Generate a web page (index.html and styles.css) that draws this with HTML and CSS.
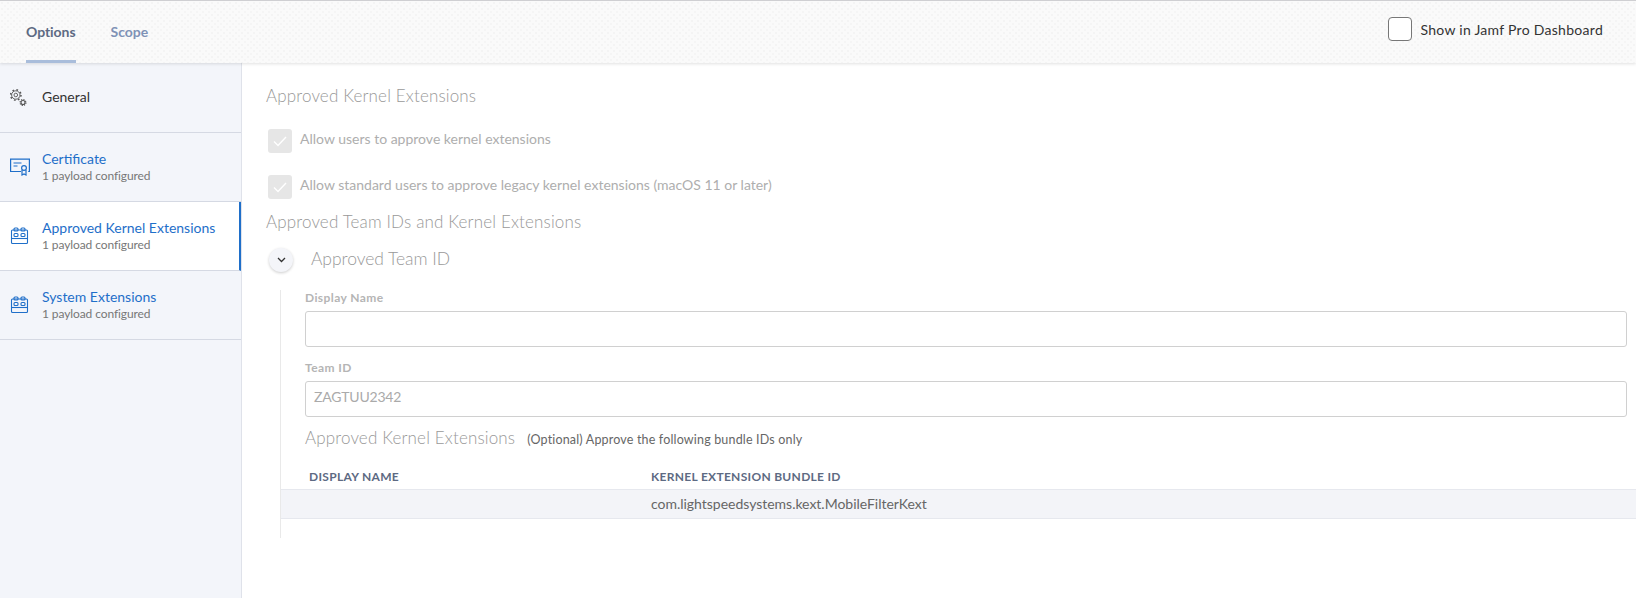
FILE: index.html
```html
<!DOCTYPE html>
<html lang="en">
<head>
<meta charset="utf-8">
<title>Approved Kernel Extensions</title>
<link rel="stylesheet" href="styles.css">
</head>
<body>
<header class="topbar">
  <nav class="tabs">
    <a class="tab tab-active">Options</a>
    <a class="tab">Scope</a>
  </nav>
  <label class="dash">
    <span class="dash-box"></span>
    <span>Show in Jamf Pro Dashboard</span>
  </label>
</header>
<div class="layout">
  <aside class="sidebar">
    <div class="item item-plain">
      <svg class="icon" width="20" height="20" viewBox="0 0 20 20" fill="none" stroke="#555">
        <circle cx="5.8" cy="8" r="4.2" stroke-width=".9"/>
        <circle cx="5.8" cy="8" r="5.2" stroke-width="1.5" stroke-dasharray="1.7 2.38"/>
        <circle cx="5.8" cy="8" r="1.8" stroke-width=".9"/>
        <circle cx="13" cy="15.5" r="2" stroke-width="1.1"/>
        <circle cx="13" cy="15.5" r="2.9" stroke-width="1.2" stroke-dasharray="1.2 1.08"/>
      </svg>
      <div class="item-text"><div class="item-name">General</div></div>
    </div>
    <div class="item">
      <svg class="icon" width="20" height="18" viewBox="0 0 20 18" fill="none" stroke="#1f6fc9" stroke-width="1.2">
        <path d="M11 13.5H.6V1.1h18.8v12.4h-1.2"/>
        <path d="M3.5 5h8M3.5 8h4"/>
        <path d="M16 5.5h.1"/>
        <circle cx="14" cy="10" r="2.4"/>
        <path d="M12 12v5l2-1 2 1v-5"/>
      </svg>
      <div class="item-text">
        <div class="item-name item-link">Certificate</div>
        <div class="item-sub">1 payload configured</div>
      </div>
    </div>
    <div class="item item-active">
      <svg class="icon" width="20" height="18" viewBox="0 0 20 18" fill="none" stroke="#1f6fc9" stroke-width="1.1">
        <rect x="1.5" y="3" width="16" height="13.5" rx="1"/>
        <path d="M1.5 11.5h16"/>
        <rect x="4" y="1" width="4" height="3" rx="1"/>
        <rect x="11" y="1" width="4" height="3" rx="1"/>
        <rect x="4" y="6.5" width="4" height="3" rx="1"/>
        <rect x="11" y="6.5" width="4" height="3" rx="1"/>
      </svg>
      <div class="item-text">
        <div class="item-name item-link">Approved Kernel Extensions</div>
        <div class="item-sub">1 payload configured</div>
      </div>
    </div>
    <div class="item">
      <svg class="icon" width="20" height="18" viewBox="0 0 20 18" fill="none" stroke="#1f6fc9" stroke-width="1.1">
        <rect x="1.5" y="3" width="16" height="13.5" rx="1"/>
        <path d="M1.5 11.5h16"/>
        <rect x="4" y="1" width="4" height="3" rx="1"/>
        <rect x="11" y="1" width="4" height="3" rx="1"/>
        <rect x="4" y="6.5" width="4" height="3" rx="1"/>
        <rect x="11" y="6.5" width="4" height="3" rx="1"/>
      </svg>
      <div class="item-text">
        <div class="item-name item-link">System Extensions</div>
        <div class="item-sub">1 payload configured</div>
      </div>
    </div>
  </aside>
  <main class="content">
    <h2 class="section-title first">Approved Kernel Extensions</h2>
    <div class="check-row">
      <span class="check"><svg width="14" height="11" viewBox="0 0 14 11" fill="none" stroke="#fff" stroke-width="1.4"><path d="M1 5.5l4 4 8-8.5"/></svg></span>
      <span class="check-label">Allow users to approve kernel extensions</span>
    </div>
    <div class="check-row">
      <span class="check"><svg width="14" height="11" viewBox="0 0 14 11" fill="none" stroke="#fff" stroke-width="1.4"><path d="M1 5.5l4 4 8-8.5"/></svg></span>
      <span class="check-label">Allow standard users to approve legacy kernel extensions (macOS 11 or later)</span>
    </div>
    <h2 class="section-title second">Approved Team IDs and Kernel Extensions</h2>
    <div class="team-head">
      <span class="toggle"><svg width="9" height="6" viewBox="0 0 9 6" fill="none" stroke="#333" stroke-width="1.3"><path d="M1 1l3.5 3.5L8 1"/></svg></span>
      <h3 class="team-title">Approved Team ID</h3>
    </div>
    <section class="team-body">
      <div class="fields">
        <div class="field-label">Display Name</div>
        <div class="input"></div>
        <div class="field-label">Team ID</div>
        <div class="input input-value">ZAGTUU2342</div>
        <div class="kext-head">
          <span class="kext-title">Approved Kernel Extensions</span>
          <span class="kext-note">(Optional) Approve the following bundle IDs only</span>
        </div>
      </div>
      <div class="table-head">
        <div class="col-a">DISPLAY NAME</div>
        <div>KERNEL EXTENSION BUNDLE ID</div>
      </div>
      <div class="table-row">
        <div class="col-a"></div>
        <div>com.lightspeedsystems.kext.MobileFilterKext</div>
      </div>
    </section>
  </main>
</div>
</body>
</html>
```
FILE: styles.css
```css
* { box-sizing: border-box; }
html, body { margin: 0; padding: 0; }
body {
  width: 1636px;
  height: 598px;
  overflow: hidden;
  background: #fff;
  font-family: Lato, "Open Sans", sans-serif;
  color: #333;
}
.topbar {
  height: 63px;
  border-top: 1px solid #cfcfd2;
  background-color: #fafafa;
  background-image: radial-gradient(circle at 2px 2px, #f4f4f4 1px, transparent 1.5px), radial-gradient(circle at 5px 5px, #f5f5f5 1px, transparent 1.5px);
  background-size: 6px 6px;
  box-shadow: 0 1px 3px rgba(0, 0, 0, .12);
  display: flex;
  justify-content: space-between;
  position: relative;
  z-index: 1;
}
.tabs { display: flex; gap: 35px; padding-left: 26px; }
.tab {
  height: 62px;
  padding-top: 22px;
  font-size: 14px;
  line-height: 18px;
  font-weight: 700;
  letter-spacing: -.05px;
  color: #7f92b6;
}
.tab-active { color: #5d6a83; border-bottom: 3px solid #a9bddb; }
.dash { display: flex; align-items: center; gap: 8px; height: 56px; padding-right: 33px; font-size: 14px; letter-spacing: .28px; color: #333; }
.dash-box { width: 24px; height: 24px; background: #fff; border: 1px solid #777; border-radius: 4px; }
.layout { display: flex; height: 535px; }
.sidebar { width: 242px; flex: none; background: #f3f5fa; border-right: 1px solid #dfe2ea; }
.item { height: 69px; display: flex; align-items: center; padding-left: 10px; border-bottom: 1px solid #d5d9e3; }
.item-plain { height: 70px; padding-bottom: 2px; }
.item-active { background: #fff; border-right: 2px solid #1f6fc9; }
.icon { flex: none; }
.item-text { margin-left: 12px; }
.item-name { font-size: 14px; line-height: 18px; color: #333; }
.item-link { color: #1f6fc9; }
.item-sub { margin-top: -1px; font-size: 12px; line-height: 17px; letter-spacing: -.1px; color: #777; }
.content { flex: 1; min-width: 0; padding: 22px 0 0 24px; }
.section-title { margin: 0; font-size: 17px; line-height: 22px; font-weight: 300; letter-spacing: .15px; color: #999; }
.check-row { display: flex; align-items: flex-start; gap: 8px; margin: 0 0 22px 2px; height: 24px; }
.first { margin-bottom: 22px; }
.check { width: 24px; height: 24px; background: #e6e6e6; border-radius: 3px; display: flex; align-items: center; justify-content: center; }
.check-label { font-size: 14px; line-height: 20px; color: #aeaeae; }
.second { margin-top: -10px; }
.team-head { display: flex; align-items: flex-start; gap: 18px; margin: 15px 0 0 3px; height: 26px; }
.toggle { width: 24px; height: 24px; border-radius: 50%; background: #f4f5f9; box-shadow: 0 1px 3px rgba(0, 0, 0, .2); display: flex; align-items: center; justify-content: center; }
.team-title { margin: 0; font-size: 17.5px; line-height: 22px; font-weight: 300; letter-spacing: -.05px; color: #999; }
.team-body { margin: 16px 0 0 14px; height: 248px; border-left: 1px solid #e9e9e9; }
.fields { padding: 0 9px 0 24px; }
.field-label { font-size: 12px; line-height: 16px; font-weight: 700; letter-spacing: .4px; color: #b5b5b5; margin-bottom: 5px; }
.input { height: 36px; border: 1px solid #d0d0d0; border-radius: 3px; padding: 0 8px; margin-bottom: 13px; font-size: 14px; line-height: 30px; color: #aaa; }
.input-value { letter-spacing: -.2px; }
.kext-head { display: flex; align-items: center; gap: 12px; height: 24px; margin-top: -5px; }
.kext-title { font-size: 17px; font-weight: 300; letter-spacing: .15px; color: #999; }
.kext-note { margin-top: 4px; font-size: 12.5px; letter-spacing: .17px; color: #666; }
.table-head { display: flex; align-items: center; height: 21px; margin-top: 17px; font-size: 12px; font-weight: 700; letter-spacing: .3px; color: #5d6a83; }
.col-a { width: 370px; padding-left: 28px; flex: none; }
.table-row { display: flex; align-items: center; height: 30px; padding-bottom: 2px; background: #f3f4f8; border-top: 1px solid #e6e8ee; border-bottom: 1px solid #e6e8ee; font-size: 14px; letter-spacing: -.02px; color: #666; margin-top: 2px; }
```
